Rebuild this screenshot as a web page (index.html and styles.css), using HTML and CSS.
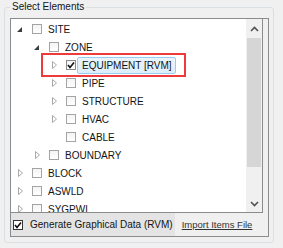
FILE: index.html
```html
<!DOCTYPE html>
<html lang="en">
<head>
  <meta charset="UTF-8">
  <title>Select Elements</title>
  <link rel="stylesheet" href="styles.css">
</head>
<body>
  <div class="group">
    <span class="legend">Select Elements</span>
    <div class="panel">
      <div class="tree">
        <ul class="tree-list">
          <li class="row lvl0"><span class="exp open"><svg width="10" height="10" viewBox="0 0 10 10"><polygon points="7,3 7,8 2,8" fill="#3c3c3c"/></svg></span><span class="chk"></span><span class="label">SITE</span></li>
          <li class="row lvl1"><span class="exp open"><svg width="10" height="10" viewBox="0 0 10 10"><polygon points="7,3 7,8 2,8" fill="#3c3c3c"/></svg></span><span class="chk"></span><span class="label">ZONE</span></li>
          <li class="row lvl2 marked"><span class="exp"><svg width="10" height="10" viewBox="0 0 10 10"><polygon points="3.5,1.5 7.5,5 3.5,8.5" fill="none" stroke="#a8a8a8"/></svg></span><span class="chk on"><svg width="8" height="8" viewBox="0 0 8 8"><polyline points="1,4 3,6.5 7,1.5" fill="none" stroke="#111" stroke-width="1.6"/></svg></span><span class="label selected">EQUIPMENT [RVM]</span><span class="callout"></span></li>
          <li class="row lvl2"><span class="exp"><svg width="10" height="10" viewBox="0 0 10 10"><polygon points="3.5,1.5 7.5,5 3.5,8.5" fill="none" stroke="#a8a8a8"/></svg></span><span class="chk"></span><span class="label">PIPE</span></li>
          <li class="row lvl2"><span class="exp"><svg width="10" height="10" viewBox="0 0 10 10"><polygon points="3.5,1.5 7.5,5 3.5,8.5" fill="none" stroke="#a8a8a8"/></svg></span><span class="chk"></span><span class="label">STRUCTURE</span></li>
          <li class="row lvl2"><span class="exp"><svg width="10" height="10" viewBox="0 0 10 10"><polygon points="3.5,1.5 7.5,5 3.5,8.5" fill="none" stroke="#a8a8a8"/></svg></span><span class="chk"></span><span class="label">HVAC</span></li>
          <li class="row lvl2"><span class="exp"></span><span class="chk"></span><span class="label">CABLE</span></li>
          <li class="row lvl1"><span class="exp"><svg width="10" height="10" viewBox="0 0 10 10"><polygon points="3.5,1.5 7.5,5 3.5,8.5" fill="none" stroke="#a8a8a8"/></svg></span><span class="chk"></span><span class="label">BOUNDARY</span></li>
          <li class="row lvl0"><span class="exp"><svg width="10" height="10" viewBox="0 0 10 10"><polygon points="3.5,1.5 7.5,5 3.5,8.5" fill="none" stroke="#a8a8a8"/></svg></span><span class="chk"></span><span class="label">BLOCK</span></li>
          <li class="row lvl0"><span class="exp"><svg width="10" height="10" viewBox="0 0 10 10"><polygon points="3.5,1.5 7.5,5 3.5,8.5" fill="none" stroke="#a8a8a8"/></svg></span><span class="chk"></span><span class="label">ASWLD</span></li>
          <li class="row lvl0"><span class="exp"><svg width="10" height="10" viewBox="0 0 10 10"><polygon points="3.5,1.5 7.5,5 3.5,8.5" fill="none" stroke="#a8a8a8"/></svg></span><span class="chk"></span><span class="label">SYGPWL</span></li>
        </ul>
        <div class="scrollbar">
          <div class="sb-btn up"><svg width="9" height="6" viewBox="0 0 9 6"><polyline points="1,5 4.5,1.5 8,5" fill="none" stroke="#505050" stroke-width="1.6"/></svg></div>
          <div class="sb-thumb"></div>
          <div class="sb-track"></div>
          <div class="sb-btn down"><svg width="9" height="6" viewBox="0 0 9 6"><polyline points="1,1 4.5,4.5 8,1" fill="none" stroke="#505050" stroke-width="1.6"/></svg></div>
        </div>
      </div>
      <div class="bottom-row">
        <label class="gen-check"><span class="chk dark on"><svg width="8" height="8" viewBox="0 0 8 8"><polyline points="1,4 3,6.5 7,1.5" fill="none" stroke="#111" stroke-width="1.6"/></svg></span>Generate Graphical Data (RVM)</label>
        <a href="#" class="import-link">Import Items File</a>
      </div>
    </div>
  </div>
</body>
</html>
```

FILE: styles.css
```css
html, body {
  margin: 0;
  background-color: #f0f0f0;
  font-family: "Liberation Sans", Arial, sans-serif;
  font-size: 10px;
  color: #141414;
  white-space: nowrap;
}
.group {
  position: relative;
  box-sizing: border-box;
  width: 270px;
  height: 236px;
  margin: 7px 0 0 4px;
  padding: 10px 4px 5px 5px;
  border: 1px solid #d9dfe3;
  border-radius: 3px;
}
.legend {
  position: absolute;
  top: -7px;
  left: 5px;
  padding: 0 2px;
  line-height: 12px;
  background-color: #f0f0f0;
}
.panel {
  width: 259px;
  box-sizing: border-box;
  border: 1px solid #8c8c8c;
  display: flex;
  flex-direction: column;
}
.tree {
  display: flex;
  width: 252px;
  height: 194px;
  box-sizing: border-box;
  border-right: 1px solid #8c8c8c;
  border-bottom: 1px solid #8c8c8c;
  background-color: #fff;
}
.tree-list {
  flex: 1;
  list-style: none;
  margin: 0;
  padding: 1px 0 0 0;
  overflow: hidden;
}
.row {
  position: relative;
  display: flex;
  align-items: center;
  height: 18px;
  padding-left: 4px;
}
.lvl1 {
  padding-left: 21px;
}
.lvl2 {
  padding-left: 38px;
}
.exp {
  width: 10px;
  height: 10px;
  margin-right: 7px;
  display: flex;
}
.chk {
  box-sizing: border-box;
  flex: none;
  width: 10px;
  height: 10px;
  border: 1px solid #a4a4a4;
  background: linear-gradient(#f4f4f4, #ffffff);
  display: flex;
  align-items: center;
  justify-content: center;
}
.chk.on {
  border-color: #8a8a8a;
}
.chk.dark {
  border-color: #333;
  background: #fff;
}
.label {
  box-sizing: border-box;
  height: 17px;
  line-height: 15px;
  margin-left: 1px;
  padding: 0 3px 0 4px;
  border: 1px solid transparent;
}
.label.selected {
  background: linear-gradient(#eaf5fd, #dbeefc);
  border-color: #9ccbef;
  border-radius: 2px;
}
.callout {
  position: absolute;
  top: -3px;
  left: 30px;
  width: 145px;
  height: 24px;
  box-sizing: border-box;
  border: 2px solid #ee3a3a;
}
.scrollbar {
  width: 16px;
  display: flex;
  flex-direction: column;
  background-color: #f0f0f0;
}
.sb-btn {
  height: 19px;
  display: flex;
  align-items: center;
  justify-content: center;
}
.sb-btn.down {
  height: 17px;
}
.sb-thumb {
  height: 129px;
  margin: 0 1px;
  background-color: #d6d6d6;
}
.sb-track {
  flex: 1;
}
.bottom-row {
  height: 23px;
  display: flex;
  align-items: center;
}
.gen-check {
  display: flex;
  align-items: center;
  align-self: stretch;
  padding: 0 2px;
  background-color: #e4e4e4;
}
.gen-check .chk {
  margin-right: 7px;
}
.import-link {
  margin-left: 7px;
  font-size: 9.5px;
  color: #333;
  text-decoration: underline;
}
```
